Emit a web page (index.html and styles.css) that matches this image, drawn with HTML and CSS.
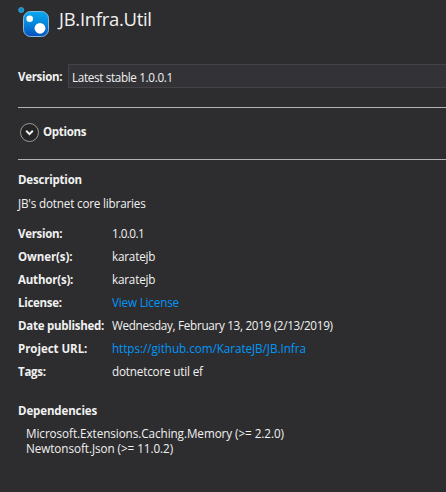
FILE: index.html
```html
<!DOCTYPE html>
<html lang="en">
<head>
<meta charset="utf-8">
<title>JB.Infra.Util</title>
<link rel="stylesheet" href="styles.css">
</head>
<body>
<main class="package">
  <header class="header">
    <svg class="logo" width="32" height="32" viewBox="0 0 32 32" aria-hidden="true">
      <defs>
        <linearGradient id="tile" x1="0" y1="0" x2="0" y2="1">
          <stop offset="0" stop-color="#08a8ef"/>
          <stop offset="0.5" stop-color="#0785dc"/>
          <stop offset="1" stop-color="#0650bd"/>
        </linearGradient>
      </defs>
      <circle cx="3.2" cy="4" r="2.6" fill="#0795d8" stroke="#5aa0c4" stroke-width="0.7"/>
      <rect x="5.5" y="5.5" width="25" height="25" rx="7" fill="url(#tile)" stroke="#83bce0" stroke-width="1"/>
      <circle cx="11.7" cy="12.7" r="3.3" fill="#fff"/>
      <circle cx="22" cy="22.3" r="5.4" fill="#fff"/>
    </svg>
    <h1 class="title">JB.Infra.Util</h1>
  </header>

  <div class="version">
    <span class="label version-label">Version:</span>
    <div class="combo">Latest stable 1.0.0.1</div>
  </div>

  <section class="options">
    <svg class="expander" width="20" height="20" viewBox="0 0 20 20" aria-hidden="true">
      <circle cx="9.5" cy="9.5" r="9" fill="#252526" stroke="#999" stroke-width="1"/>
      <path d="M6.2 7.8 L9.5 11.1 L12.8 7.8" fill="none" stroke="#f1f1f1" stroke-width="2"/>
    </svg>
    <span class="label options-label">Options</span>
  </section>

  <h2 class="label heading description-heading">Description</h2>
  <p class="description">JB's dotnet core libraries</p>

  <dl class="details">
    <dt class="label version-label">Version:</dt><dd class="number">1.0.0.1</dd>
    <dt class="label owner-label">Owner(s):</dt><dd>karatejb</dd>
    <dt class="label">Author(s):</dt><dd>karatejb</dd>
    <dt class="label version-label">License:</dt><dd><a class="link">View License</a></dd>
    <dt class="label date-label">Date published:</dt><dd class="date">Wednesday, February 13, 2019 (2/13/2019)</dd>
    <dt class="label project-label">Project URL:</dt><dd><a class="link url">https://github.com/KarateJB/JB.Infra</a></dd>
    <dt class="label date-label">Tags:</dt><dd>dotnetcore util ef</dd>
  </dl>

  <h2 class="label heading dependencies-heading">Dependencies</h2>
  <ul class="dependencies">
    <li>Microsoft.Extensions.Caching.Memory (&gt;= 2.2.0)</li>
    <li>Newtonsoft.Json (&gt;= 11.0.2)</li>
  </ul>
</main>
</body>
</html>
```
FILE: styles.css
```css
* { box-sizing: border-box; }
body {
  margin: 0;
  background: #2d2d2f;
  color: #f1f1f1;
  font: 11.7px/23px "Open Sans", "Noto Sans", sans-serif;
  letter-spacing: -0.18px;
  overflow: hidden;
  white-space: nowrap;
}
.package { height: 492px; padding: 6px 0 0 18px; }
.header { display: flex; height: 58px; }
.logo { flex: none; }
.title { margin: 0 0 0 9px; font-size: 18.5px; font-weight: 400; line-height: 25px; letter-spacing: -0.3px; }
.label { font-weight: 700; font-size: 11.5px; letter-spacing: -0.2px; }
.version { display: grid; grid-template-columns: 50px 1fr; height: 43px; align-items: start; line-height: 26px; }
.version-label { letter-spacing: -0.3px; }
.owner-label { letter-spacing: -0.1px; }
.date-label { letter-spacing: -0.26px; }
.project-label { letter-spacing: -0.04px; }
.combo { height: 24px; padding-left: 3px; border: 1px solid #434346; border-right: 0; background: #333337; line-height: 24px; letter-spacing: -0.34px; }
.options {
  display: flex;
  align-items: center;
  height: 53px;
  padding: 0 0 2px 2px;
  border-top: 1px solid #b2b2b4;
  border-bottom: 1px solid #b2b2b4;
}
.options-label { line-height: 21px; margin-bottom: 2px; letter-spacing: -0.3px; }
.expander { margin-right: 3px; }
.heading { margin: 0; line-height: 23px; }
.description-heading { margin-top: 8px; }
.description { margin: 1px 0 7px; }
.details { display: grid; grid-template-columns: 94px 1fr; grid-auto-rows: 23px; margin: 0 0 16px; }
.details dd { margin: 0; }
.details .number { letter-spacing: -0.55px; }
.details .date { letter-spacing: -0.3px; }
.link { color: #0097fb; }
.link.url { letter-spacing: -0.05px; }
.dependencies-heading { letter-spacing: -0.12px; }
.dependencies { list-style: none; margin: 4px 0 0; padding: 0 0 0 8px; line-height: 15px; letter-spacing: -0.06px; }
```
